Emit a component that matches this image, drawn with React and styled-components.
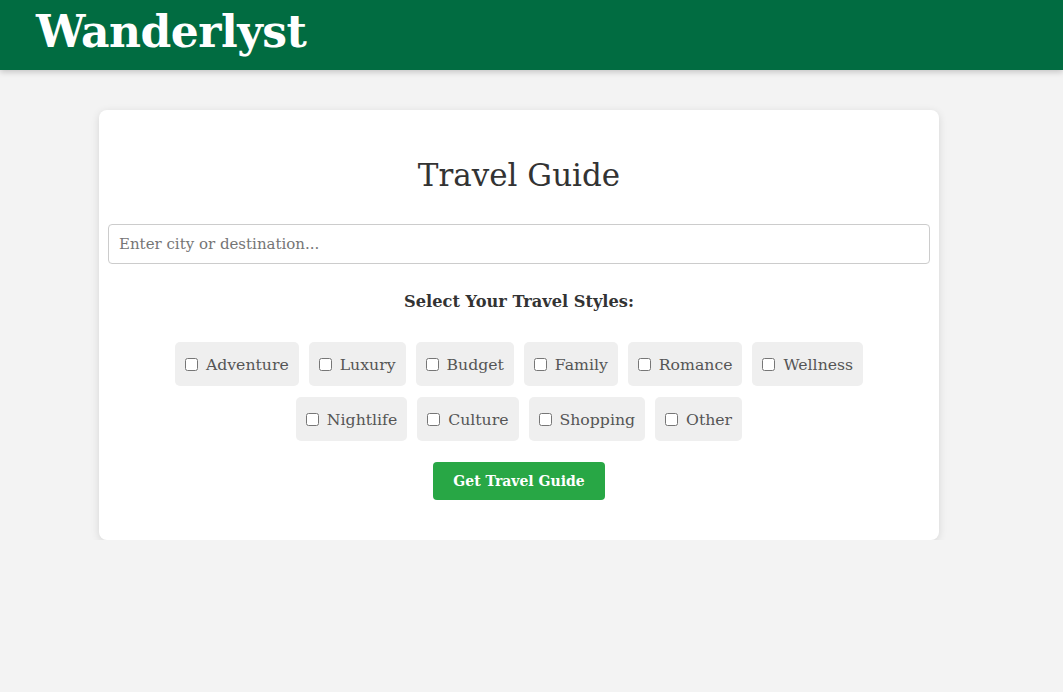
import React, { useState } from 'react';
import styled, { createGlobalStyle } from 'styled-components';

const GlobalStyle = createGlobalStyle`
    html, body {
        margin: 0;
        padding: 0;
        background-color: #f3f3f3;
        font-family: "DejaVu Serif", "Liberation Serif", serif;
    }
`

const Header = styled.header`
    height: 70px;
    background-color: #016c41;
    box-shadow: 0 2px 6px rgba(0, 0, 0, 0.2);
    display: flex;
    align-items: center;
    padding: 0 36px;
`

const Logo = styled.h1`
    margin: 0;
    margin-top: -8px;
    color: #ffffff;
    font-size: 44px;
    font-weight: 700;
    letter-spacing: -0.5px;
`

const Main = styled.main`
    display: flex;
    justify-content: center;
    padding: 40px 25px 0 0;
`

const Card = styled.div`
    width: 840px;
    box-sizing: border-box;
    background-color: #ffffff;
    border-radius: 8px;
    box-shadow: 0 2px 8px rgba(0, 0, 0, 0.12);
    padding: 40px 9px 40px;
    display: flex;
    flex-direction: column;
    align-items: center;
`

const Title = styled.h2`
    margin: 7px 0 31px;
    font-size: 31px;
    font-weight: 400;
    color: #333333;
`

const SearchInput = styled.input`
    width: 100%;
    box-sizing: border-box;
    height: 40px;
    padding: 0 10px;
    border: 1px solid #cccccc;
    border-radius: 4px;
    font-family: inherit;
    font-size: 15px;
    color: #333;
    &::placeholder {
        color: #757575;
    }
`

const Subtitle = styled.h3`
    margin: 28px 0 31px;
    font-size: 16.2px;
    font-weight: 600;
    color: #333333;
`

const Styles = styled.div`
    display: flex;
    flex-wrap: wrap;
    justify-content: center;
    gap: 11px 10px;
    max-width: 720px;
`

const Chip = styled.label`
    display: flex;
    align-items: center;
    height: 44px;
    box-sizing: border-box;
    padding: 0 10px;
    background-color: #efefef;
    border-radius: 5px;
    font-size: 15.7px;
    color: #555555;
    cursor: pointer;

    input {
        margin: 0 8px 0 0;
        width: 13px;
        height: 13px;
    }
`

const Button = styled.button`
    margin-top: 21px;
    height: 38px;
    padding: 0 20px;
    border: none;
    border-radius: 4px;
    background-color: #28a745;
    color: #ffffff;
    font-family: inherit;
    font-size: 14px;
    font-weight: 600;
    cursor: pointer;
`

const travelStyles = [
    'Adventure', 'Luxury', 'Budget', 'Family', 'Romance', 'Wellness',
    'Nightlife', 'Culture', 'Shopping', 'Other'
]

const App = () => {
    const [selected, setSelected] = useState([])

    const toggle = (s) => {
        setSelected(selected.includes(s) ? selected.filter(x => x !== s) : [...selected, s])
    }

    return (
        <>
            <GlobalStyle />
            <Header>
                <Logo>Wanderlyst</Logo>
            </Header>
            <Main>
                <Card>
                    <Title>Travel Guide</Title>
                    <SearchInput placeholder="Enter city or destination..." />
                    <Subtitle>Select Your Travel Styles:</Subtitle>
                    <Styles>
                        {travelStyles.map(s => (
                            <Chip key={s}>
                                <input type="checkbox" checked={selected.includes(s)} onChange={() => toggle(s)} />
                                {s}
                            </Chip>
                        ))}
                    </Styles>
                    <Button>Get Travel Guide</Button>
                </Card>
            </Main>
        </>
    )
}

export default App;
